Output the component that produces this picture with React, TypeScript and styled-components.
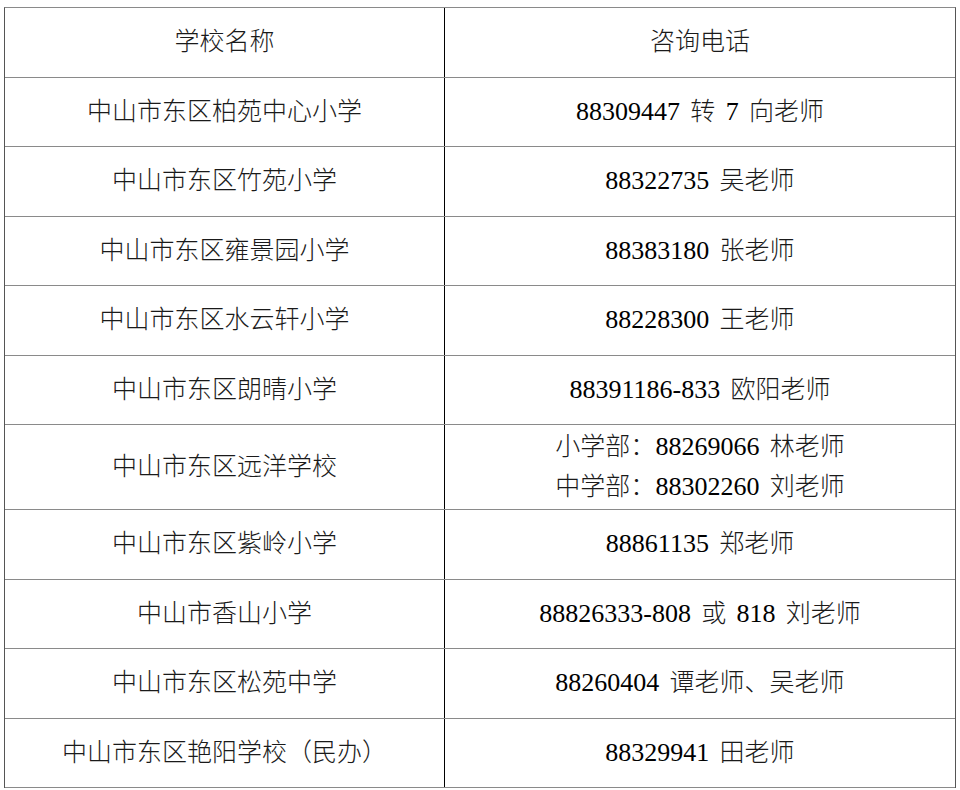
import React from "react";
import styled, { createGlobalStyle } from "styled-components";

const Global = createGlobalStyle`
  html, body { margin: 0; padding: 0; background: #ffffff; }
  body {
    padding: 7px 4px 0 4px;
    font-family: "Liberation Serif", "Noto Sans CJK SC", serif;
    color: #111;
  }
`;

const Table = styled.div`
  width: 952px;
  box-sizing: border-box;
  border-left: 1.5px solid #555;
  border-right: 1.5px solid #555;
  border-top: 1px solid #8a8a8a;
  display: flex;
  flex-direction: column;
`;

const Row = styled.div<{ $h: number }>`
  display: grid;
  grid-template-columns: 440px 1fr;
  height: ${(p) => p.$h}px;
  border-bottom: 1.5px solid #8a8a8a;
  box-sizing: border-box;
`;

const Cell = styled.div<{ $divider?: boolean }>`
  display: flex;
  flex-direction: column;
  align-items: center;
  justify-content: center;
  font-size: 25px;
  font-weight: 300;
  line-height: 40px;
  white-space: pre;
  word-spacing: 4px;
  color: #1a1a1a;
  border-right: ${(p) => (p.$divider ? "1px solid #000" : "none")};
`;

const Num = styled.span`
  font-size: 26px;
  font-weight: 400;
  color: #000;
`;

const renderText = (t: string) =>
  t.split(/([0-9\-]+)/).map((seg, i) =>
    /^[0-9\-]+$/.test(seg) ? <Num key={i}>{seg}</Num> : <React.Fragment key={i}>{seg}</React.Fragment>
  );

const rows: { name: string; phone: string[]; h?: number }[] = [
  { name: "中山市东区柏苑中心小学", phone: ["88309447 转 7 向老师"] },
  { name: "中山市东区竹苑小学", phone: ["88322735 吴老师"] },
  { name: "中山市东区雍景园小学", phone: ["88383180 张老师"] },
  { name: "中山市东区水云轩小学", phone: ["88228300 王老师"] },
  { name: "中山市东区朗晴小学", phone: ["88391186-833 欧阳老师"] },
  {
    name: "中山市东区远洋学校",
    phone: ["小学部：88269066 林老师", "中学部：88302260 刘老师"],
    h: 85,
  },
  { name: "中山市东区紫岭小学", phone: ["88861135 郑老师"] },
  { name: "中山市香山小学", phone: ["88826333-808 或 818 刘老师"] },
  { name: "中山市东区松苑中学", phone: ["88260404 谭老师、吴老师"] },
  { name: "中山市东区艳阳学校（民办）", phone: ["88329941 田老师"] },
];

export default function App() {
  return (
    <>
      <Global />
      <Table>
        <Row $h={69.5}>
          <Cell $divider>学校名称</Cell>
          <Cell>咨询电话</Cell>
        </Row>
        {rows.map((r) => (
          <Row key={r.name} $h={r.h ?? 69.5}>
            <Cell $divider>{r.name}</Cell>
            <Cell>
              {r.phone.map((p) => (
                <span key={p}>{renderText(p)}</span>
              ))}
            </Cell>
          </Row>
        ))}
      </Table>
    </>
  );
}
